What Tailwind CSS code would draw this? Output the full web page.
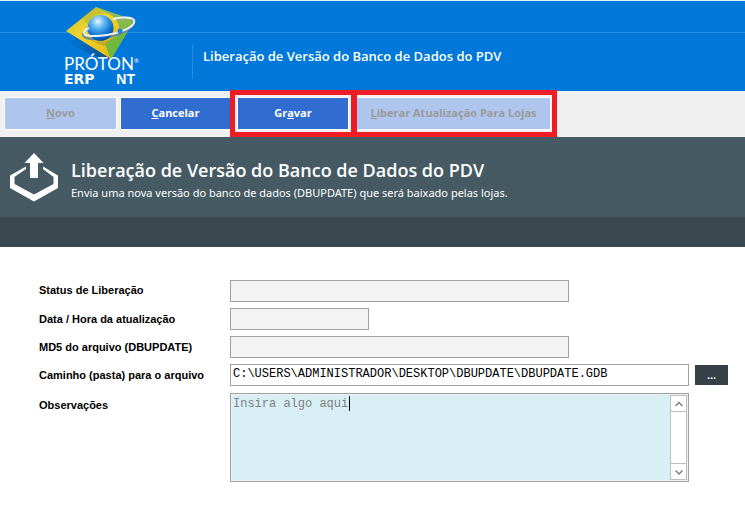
<!DOCTYPE html>
<html lang="pt-BR">
  <head>
    <meta charset="UTF-8" />
    <meta name="viewport" content="width=device-width, initial-scale=1.0" />
    <script src="https://cdn.jsdelivr.net/npm/@tailwindcss/browser@4"></script>
    <title>Liberação de Versão do Banco de Dados do PDV</title>
  </head>
  <body class="min-h-screen bg-white font-['Open_Sans','Noto_Sans',sans-serif]">
    <!-- Top bar -->
    <header
      class="relative flex h-[91px] border-t border-[#e8f0f8] bg-[#0078d9] pl-16 text-white"
    >
      <div class="absolute inset-x-0 top-[31px] h-px bg-[#2a8ee0]"></div>
      <div class="relative flex w-32 shrink-0 flex-col pt-1">
        <svg class="h-[54px] w-[74px] shrink-0" viewBox="0 0 74 54" aria-hidden="true">
          <defs>
            <linearGradient id="gold" x1="0" y1="0" x2="1" y2="1">
              <stop offset="0" stop-color="#c9c036" />
              <stop offset="0.4" stop-color="#f2d52c" />
              <stop offset="1" stop-color="#d9a915" />
            </linearGradient>
            <linearGradient id="leaf" x1="0" y1="0" x2="0" y2="1">
              <stop offset="0" stop-color="#9dbb55" />
              <stop offset="0.5" stop-color="#7fb84a" />
              <stop offset="1" stop-color="#2f8a3a" />
            </linearGradient>
            <radialGradient id="globe" cx="0.4" cy="0.25" r="0.75">
              <stop offset="0" stop-color="#e8f7ff" />
              <stop offset="0.35" stop-color="#5bb5f0" />
              <stop offset="0.75" stop-color="#0b6fd0" />
              <stop offset="1" stop-color="#0a4fa8" />
            </radialGradient>
            <linearGradient id="shade" x1="0" y1="0" x2="1" y2="0">
              <stop offset="0" stop-color="#064a92" stop-opacity="0" />
              <stop offset="1" stop-color="#062f60" stop-opacity="0.7" />
            </linearGradient>
          </defs>
          <path d="M2 38 12 32 33 42 47 54 34 52Z" fill="url(#shade)" />
          <path d="M32 2 69 17 47 54 2 26Z" fill="url(#gold)" />
          <path d="M32 2 70 15 47 54 42 40Q53 36 55 25 56 14 43 8Z" fill="url(#leaf)" />
          <path d="M41 39 47 34 63 28 47 54Z" fill="#6fb83c" />
          <path d="M32 2 18 13 23 19 31 10 43 8Z" fill="#a7b832" opacity="0.5" />
          <path d="M23 28Q25 35 33 36 41 38 48 33L40 41 24 34Z" fill="#b3951c" opacity="0.6" />
          <path
            d="M52 14C73 9 76 20 58 28 41 35 20 36 19 30 19 27 23 25 26 24"
            fill="none" stroke="#5f8f9a" stroke-width="2"
          />
          <circle cx="36.500" cy="23" r="13" fill="url(#globe)" />
          <path
            d="M49 14C65 11 72 13 70 18 68 23 55 28 43 30 30 32 20 31 20 28 20 26 23 24 25 23"
            fill="none" stroke="#eef5fb" stroke-width="2"
          />
          <circle cx="56" cy="26" r="2.500" fill="#1b83dc" />
        </svg>
        <div class="-mt-1 flex w-[76px] font-['Lato',sans-serif] text-[17px] leading-[18px]">
          PRÓTON<span class="text-[6px] leading-[12px]">®</span>
        </div>
        <div
          class="flex w-[71px] justify-between font-['DejaVu_Sans',sans-serif] text-[14px] leading-[12px] font-bold"
        >
          <span>ERP</span>
          <span class="font-['Liberation_Sans',sans-serif]">NT</span>
        </div>
      </div>
      <div class="relative mt-11 h-[34px] border-l border-[#2a8ee0] pl-[10px]">
        <h1 class="text-[13px] leading-[22px] font-semibold">
          Liberação de Versão do Banco de Dados do PDV
        </h1>
      </div>
    </header>

    <!-- Actions -->
    <nav class="flex h-[46px] bg-[#f0f0f0] pl-1 text-[11px] font-bold">
      <button
        disabled
        class="mt-1.5 mr-[3px] h-[33px] w-[113px] border border-white bg-[#aec5ed] text-[#9a9a9a]"
      >
        <u>N</u>ovo
      </button>
      <button
        class="mt-1.5 h-[33px] w-[110px] border border-r-0 border-white bg-[#316dd0] text-white"
      >
        <u>C</u>ancelar
      </button>
      <div
        class="relative -mt-px h-[47px] border-5 border-r-6 border-[#ee1c25] bg-[#f0f0f0] px-0.5 pt-0.5"
      >
        <button class="h-[33px] w-28 border border-white bg-[#316dd0] text-white">
          Gr<u>a</u>var
        </button>
      </div>
      <div
        class="relative -mt-px h-[47px] border-5 border-l-0 border-[#ee1c25] bg-[#f0f0f0] pt-0.5 pr-px"
      >
        <button
          disabled
          class="h-[33px] w-[194px] border border-l-0 border-white bg-[#aec5ed] text-[#9a9a9a]"
        >
          <u>L</u>iberar Atualização Para Lojas
        </button>
      </div>
    </nav>

    <!-- Page title -->
    <section class="flex h-20 bg-[#465a63] pl-2 text-white">
      <svg class="mt-3.5 h-[54px] w-[52px] shrink-0" viewBox="0 0 52 54" fill="#fff" aria-hidden="true">
        <path d="M26 2 35.500 12H30V27H22V12H16.500Z" />
        <path d="M18 15.500 2 24.500V37L26 50.500 50 37V24.500L35 15.500V18L45.500 26V33L26 43.500 6.500 33V26L18 18Z" />
      </svg>
      <div class="pt-5 pl-[11px]">
        <h2 class="text-[18px] leading-[26px] font-semibold">
          Liberação de Versão do Banco de Dados do PDV
        </h2>
        <p class="font-['Noto_Sans',sans-serif] text-[11px] leading-[20px]">
          Envia uma nova versão do banco de dados (DBUPDATE) que será baixado pelas lojas.
        </p>
      </div>
    </section>
    <div class="h-[30px] bg-[#39474f]"></div>

    <!-- Form -->
    <form
      class="grid grid-cols-[191px_1fr] gap-y-1.5 pt-[33px] pr-4 pl-[39px] font-['Liberation_Sans',sans-serif] text-[11px] text-black"
    >
      <label for="status" class="leading-[20px] font-bold">Status de Liberação</label>
      <input
        id="status" type="text" readonly
        class="h-[22px] w-[339px] border border-[#a0a0a0] bg-[#f3f3f3]"
      />
      <label for="data" class="leading-[22px] font-bold">Data / Hora da atualização</label>
      <input
        id="data" type="text" readonly
        class="h-[22px] w-[139px] border border-[#a0a0a0] bg-[#f3f3f3]"
      />
      <label for="md5" class="leading-[22px] font-bold">MD5 do arquivo (DBUPDATE)</label>
      <input
        id="md5" type="text" readonly
        class="h-[22px] w-[339px] border border-[#a0a0a0] bg-[#f3f3f3]"
      />
      <label for="caminho" class="leading-[22px] font-bold">Caminho (pasta) para o arquivo</label>
      <div class="flex h-[22px] items-center gap-1.5">
        <input
          id="caminho" type="text" value="C:\USERS\ADMINISTRADOR\DESKTOP\DBUPDATE\DBUPDATE.GDB"
          class="h-[22px] w-[459px] border border-[#a0a0a0] bg-white px-0.5 pb-0.5 font-['Liberation_Mono',monospace] text-[12px]"
        />
        <button
          type="button" aria-label="Procurar arquivo"
          class="h-5 w-[33px] bg-[#373f47] font-bold text-white"
        >
          ...
        </button>
      </div>
      <label for="obs" class="pt-px leading-[24px] font-bold">Observações</label>
      <div class="relative mt-px flex h-[89px] w-[459px] border border-[#a0a0a0] bg-[#f0f0f0] p-px">
        <textarea
          id="obs" placeholder="Insira algo aqui"
          class="h-full flex-1 resize-none overflow-hidden bg-[#d7eff5] px-px pt-px font-['Liberation_Mono',monospace] text-[12px] leading-4 outline-none placeholder:text-[#808080]"
        ></textarea>
        <div class="absolute top-0.5 left-[118px] h-[15px] w-px bg-black"></div>
        <div class="flex w-[17px] flex-col border border-[#bdbdbd] bg-white">
          <button type="button" aria-label="Rolar para cima" class="flex h-4 items-center justify-center border-b border-[#bdbdbd]">
            <svg class="h-2 w-2" viewBox="0 0 8 8" fill="none" stroke="#808080" stroke-width="1.500"><path d="M.5 6 4 2.500 7.500 6" /></svg>
          </button>
          <div class="flex-1"></div>
          <button type="button" aria-label="Rolar para baixo" class="flex h-4 items-center justify-center border-t border-[#bdbdbd]">
            <svg class="h-2 w-2" viewBox="0 0 8 8" fill="none" stroke="#808080" stroke-width="1.500"><path d="M.5 2.500 4 6 7.500 2.500" /></svg>
          </button>
        </div>
      </div>
    </form>
  </body>
</html>
